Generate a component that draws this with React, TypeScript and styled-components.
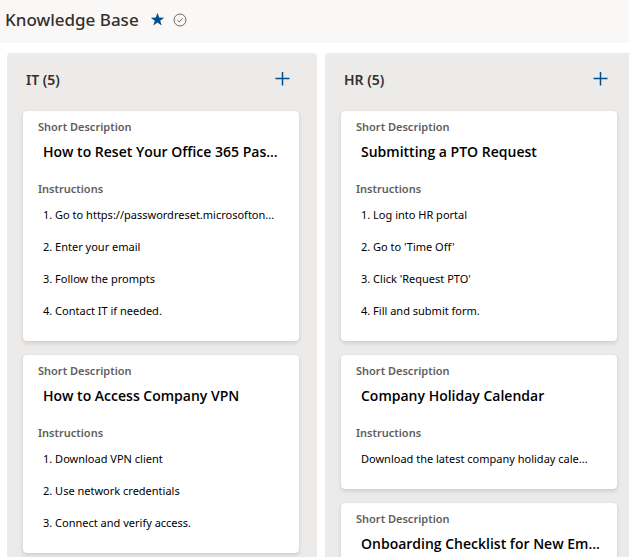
import React from "react";
import styled, { createGlobalStyle } from "styled-components";

const GlobalStyle = createGlobalStyle`
  *, *::before, *::after { box-sizing: border-box; }
  body {
    margin: 0;
    background: #ffffff;
    color: #000000;
    font-family: "Noto Sans", "Open Sans", sans-serif;
    font-size: 11px;
  }
`;

const Page = styled.div`
  display: flex;
  flex-direction: column;
  height: 100vh;
  overflow: hidden;
`;

const Header = styled.header`
  display: flex;
  flex: none;
  align-items: center;
  height: 43px;
  padding: 0 5px 4px;
  background: #f9f8f7;
`;

const PageTitle = styled.h1`
  margin: 0 11px 0 0;
  color: #323130;
  font-size: 17px;
  font-weight: 500;
  line-height: 24px;
`;

const IconButton = styled.button`
  display: inline-flex;
  flex: none;
  align-items: center;
  justify-content: center;
  padding: 0;
  border: 0;
  background: none;
  color: #004e8c;
  cursor: pointer;
`;

const StarButton = styled(IconButton)`
  margin-right: 8px;
`;

const StatusIcon = styled.svg`
  display: block;
  color: #605e5c;
`;

const Board = styled.main`
  display: flex;
  flex: 1;
  gap: 8px;
  min-height: 0;
  padding: 10px 7px 0;
  overflow: auto;
  scrollbar-width: none;
`;

const Lane = styled.section`
  flex: 1 0 310px;
  min-width: 0;
  min-height: max-content;
  padding: 0 18px 14px 16px;
  border-radius: 4px 4px 0 0;
  background: #edebe9;
`;

const LaneHeader = styled.header`
  display: flex;
  align-items: center;
  justify-content: space-between;
  height: 58px;
  padding: 0 8px 4px 3px;
`;

const LaneTitle = styled.h2`
  margin: 0;
  color: #323130;
  font-size: 14px;
  font-weight: 600;
  line-height: 20px;
`;

const CardList = styled.div`
  display: grid;
  grid-template-columns: minmax(0, 1fr);
  gap: 14px;
`;

const CardBox = styled.article`
  padding: 8px 15px 14px;
  border-radius: 4px;
  background: #ffffff;
  box-shadow: 0 2px 4px rgba(0, 0, 0, 0.13), 0 0 1px rgba(0, 0, 0, 0.11);
`;

const Label = styled.div`
  color: #605e5c;
  font-size: 11px;
  font-weight: 600;
  line-height: 16px;
`;

const CardTitle = styled.h3`
  margin: 0 0 12px;
  padding-left: 5px;
  font-family: "Open Sans", "Noto Sans", sans-serif;
  font-size: 14px;
  font-weight: 600;
  line-height: 34px;
  white-space: nowrap;
`;

const Instructions = styled.div`
  padding: 2px 0 0 5px;
`;

const Line = styled.p`
  margin: 0;
  font-size: 11px;
  line-height: 32px;
  white-space: nowrap;
`;

type CardData = { title: string; lines: string[] };
type LaneData = { name: string; count: number; cards: CardData[] };

const lanes: LaneData[] = [
  {
    name: "IT",
    count: 5,
    cards: [
      {
        title: "How to Reset Your Office 365 Pas...",
        lines: [
          "1. Go to https://passwordreset.microsofton...",
          "2. Enter your email",
          "3. Follow the prompts",
          "4. Contact IT if needed.",
        ],
      },
      {
        title: "How to Access Company VPN",
        lines: [
          "1. Download VPN client",
          "2. Use network credentials",
          "3. Connect and verify access.",
        ],
      },
    ],
  },
  {
    name: "HR",
    count: 5,
    cards: [
      {
        title: "Submitting a PTO Request",
        lines: [
          "1. Log into HR portal",
          "2. Go to 'Time Off'",
          "3. Click 'Request PTO'",
          "4. Fill and submit form.",
        ],
      },
      {
        title: "Company Holiday Calendar",
        lines: ["Download the latest company holiday cale..."],
      },
      { title: "Onboarding Checklist for New Em...", lines: [] },
    ],
  },
];

const Card = ({ title, lines }: CardData) => (
  <CardBox>
    <Label>Short Description</Label>
    <CardTitle>{title}</CardTitle>
    {lines.length > 0 && (
      <>
        <Label>Instructions</Label>
        <Instructions>
          {lines.map((line) => (
            <Line key={line}>{line}</Line>
          ))}
        </Instructions>
      </>
    )}
  </CardBox>
);

export default function App() {
  return (
    <>
      <GlobalStyle />
      <Page>
        <Header>
          <PageTitle>Knowledge Base</PageTitle>
          <StarButton type="button" aria-label="Favorite">
            <svg width="15" height="15" viewBox="0 0 15 15" fill="currentColor">
              <path d="M7.5 0.8 9.2 5.5 14.2 5.7 10.2 8.7 11.7 13.5 7.5 10.6 3.3 13.5 4.8 8.7 0.8 5.7 5.8 5.5Z" />
            </svg>
          </StarButton>
          <StatusIcon
            width="14"
            height="14"
            viewBox="0 0 14 14"
            fill="none"
            stroke="currentColor"
            strokeWidth="0.9"
            aria-hidden="true"
          >
            <circle cx="7" cy="7" r="6" />
            <path d="M4.3 7.2 6.2 9 9.7 5.3" />
          </StatusIcon>
        </Header>
        <Board>
          {lanes.map((lane) => (
            <Lane key={lane.name}>
              <LaneHeader>
                <LaneTitle>
                  {lane.name} ({lane.count})
                </LaneTitle>
                <IconButton type="button" aria-label={`Add to ${lane.name}`}>
                  <svg width="16" height="16" viewBox="0 0 16 16" fill="none" stroke="currentColor" strokeWidth="1.5">
                    <path d="M7.5 0V13.5M0.5 6.5H14.5" />
                  </svg>
                </IconButton>
              </LaneHeader>
              <CardList>
                {lane.cards.map((card) => (
                  <Card key={card.title} {...card} />
                ))}
              </CardList>
            </Lane>
          ))}
        </Board>
      </Page>
    </>
  );
}
